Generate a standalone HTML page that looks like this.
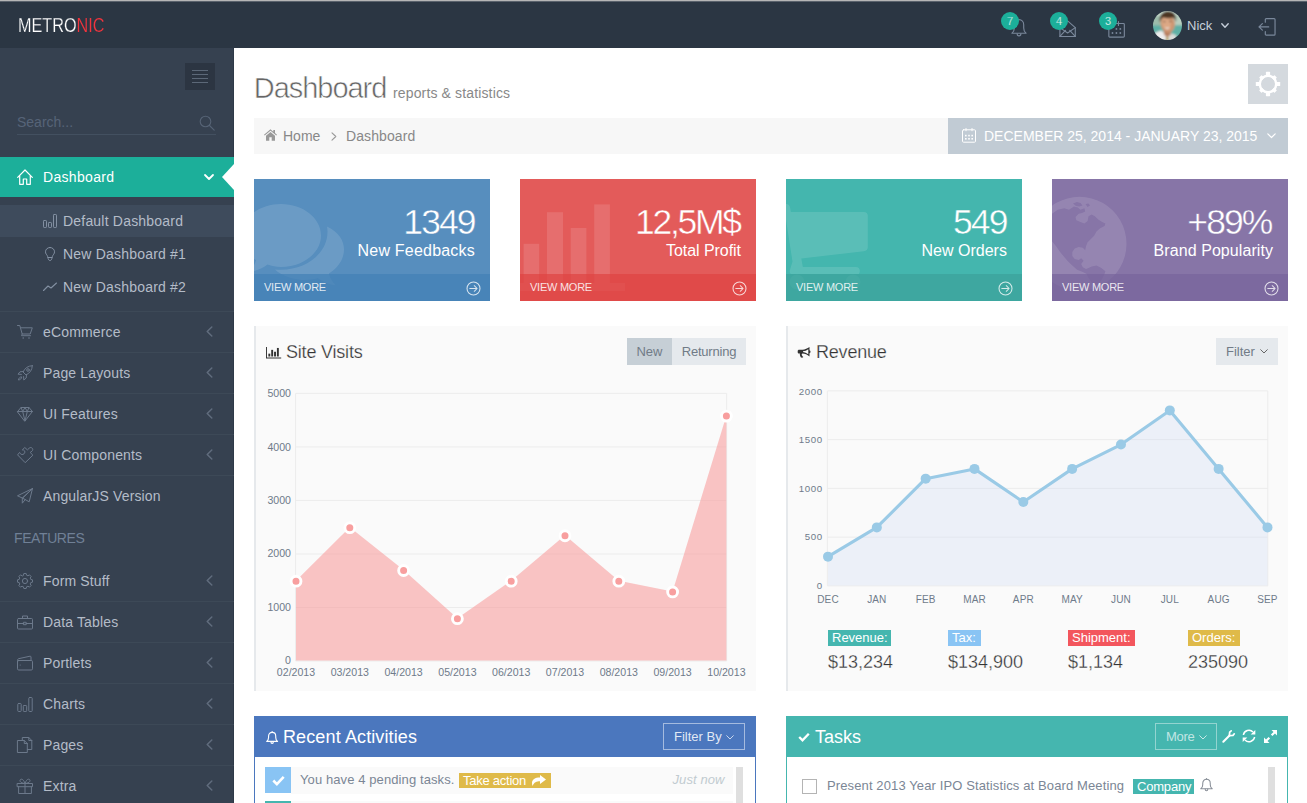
<!DOCTYPE html>
<html>
<head>
<meta charset="utf-8">
<title>Metronic | Dashboard</title>
<style>
*{box-sizing:border-box;margin:0;padding:0}
html,body{width:1307px;height:803px;overflow:hidden;background:#fff}
body{font-family:"Liberation Sans",sans-serif;font-size:14px;color:#333;position:relative}
.abs{position:absolute}
svg{display:block;overflow:visible}
/* header */
#hdr{position:absolute;left:0;top:0;width:1307px;height:48px;background:#2b3643}
#topline{position:absolute;left:0;top:0;width:1307px;height:2px;background:linear-gradient(#b6b6b6 0,#b6b6b6 50%,#5a626c 50%,#5a626c 100%)}
#logo{position:absolute;left:18px;top:14px;font-size:20.300px;line-height:22px;color:#fff;letter-spacing:0;transform-origin:0 50%;transform:scaleX(0.800);-webkit-text-stroke:0.250px #2b3643}
#logo b{font-weight:normal;color:#f0353e;-webkit-text-stroke:0.150px #2b3643}
.badge{position:absolute;width:18px;height:18px;border-radius:9px;background:#1caf9a;color:#fff;font-size:11px;line-height:18px;text-align:center;-webkit-text-stroke:0.250px #1caf9a}
#uname{position:absolute;left:1187px;top:18px;font-size:13px;line-height:16px;color:#c6cfda}
#avatar{position:absolute;left:1153px;top:11px;width:29px;height:29px}
/* sidebar */
#side{position:absolute;left:0;top:48px;width:234px;height:755px;background:#364150;border-right:1px solid #2e3947}
#toggler{position:absolute;left:185px;top:63px;width:30px;height:27px;background:#2c3542}
#toggler i{position:absolute;left:7px;width:16px;height:1px;background:#5c6878}
#search{position:absolute;left:17px;top:114px;font-size:14px;line-height:16px;color:#566478}
#searchline{position:absolute;left:17px;top:134px;width:199px;height:1px;background:#435060}
.mi{position:absolute;left:0;width:234px;height:41px;border-top:1px solid #3d4957;color:#b4bcc8;font-size:14px}
.mi span{position:absolute;left:43px;top:12px;line-height:16px;white-space:nowrap;letter-spacing:0.150px}
.mi svg.ic{position:absolute;left:17px;top:12px}
.mi svg.ar{position:absolute;left:205.500px;top:14.200px}
#act{position:absolute;left:0;top:157px;width:234px;height:40px;background:#1caf9a;color:#fff}
#act span{position:absolute;left:43px;top:12px;line-height:16px;letter-spacing:0.320px}
#sub{position:absolute;left:0;top:197px;width:234px;height:114px;background:#364150}
.si{position:absolute;left:0;width:234px;height:32px;color:#b4bcc8;font-size:14px}
.si span{position:absolute;left:63px;top:8px;line-height:16px;white-space:nowrap;letter-spacing:0.200px}
.si svg{position:absolute;left:43px;top:9px}
#feat{position:absolute;left:14px;top:529px;font-size:14px;line-height:18px;color:#708096;letter-spacing:-0.400px}
/* content */
#title{position:absolute;left:253.800px;top:70px;font-size:29px;line-height:36px;color:#666;letter-spacing:-1.050px;white-space:nowrap;-webkit-text-stroke:0.550px #fff}
#subtitle{position:absolute;left:393px;top:85px;font-size:14px;line-height:16px;color:#888;letter-spacing:0.140px;white-space:nowrap}
#gear{position:absolute;left:1248px;top:64px;width:40px;height:40px;background:#d4d9de}
#bc{position:absolute;left:254px;top:118px;width:1034px;height:36px;background:#f7f7f7;color:#888}
#bc span{position:absolute;top:10px;line-height:16px;font-size:14px;white-space:nowrap}
#drange{position:absolute;left:948px;top:118px;width:340px;height:36px;background:#c1cbd4;color:#fff}
#drange span{position:absolute;left:36px;top:10px;font-size:14px;line-height:16px;white-space:nowrap}

.tile{position:absolute;top:179px;width:236px;height:122px;overflow:hidden;color:#fff}
.tile .vis{position:absolute;left:0;top:0}
.tile .num{position:absolute;right:13.500px;top:22.500px;font-size:35.500px;line-height:40px;letter-spacing:-1.900px;white-space:nowrap;-webkit-text-stroke:0.450px var(--bg)}
.tile .desc{position:absolute;right:15px;top:62px;font-size:16px;line-height:20px;white-space:nowrap;letter-spacing:0.200px}
.tile .more{position:absolute;left:0;top:95px;width:236px;height:27px}
.tile .more span{position:absolute;left:10px;top:7px;font-size:11px;line-height:13px;color:rgba(255,255,255,0.85);white-space:nowrap;letter-spacing:-0.250px}
.tile .more svg{position:absolute;left:211.500px;top:6.600px}

.plt{position:absolute;top:326px;width:502px;height:365px;background:#fafafa;border-left:2px solid #e6e9ec}
.plt>*{margin-left:-2px}
.ptitle{position:absolute;top:15px;font-size:18px;line-height:22px;color:#333;white-space:nowrap;letter-spacing:-0.200px;-webkit-text-stroke:0.250px #fafafa}
.btn{position:absolute;top:12px;height:27px;font-size:13px;line-height:27px;color:#717b87;text-align:center;white-space:nowrap}
.yl{position:absolute;left:0;margin-top:-0.500px;height:14px;line-height:14px;font-size:10.600px;color:#6f7b8a;text-align:right;white-space:nowrap}
.xl{position:absolute;width:60px;height:14px;line-height:14px;font-size:10.600px;color:#6f7b8a;text-align:center;white-space:nowrap}
.xu{letter-spacing:0.120px;font-size:10px}
.lbl{position:absolute;height:15.500px;line-height:15.500px;font-size:13px;color:#fff;padding:0 0 0 4px;white-space:nowrap}
.sval{position:absolute;top:325px;font-size:18px;line-height:22px;color:#333;white-space:nowrap;-webkit-text-stroke:0.300px #fafafa}

.bp{position:absolute;top:716px;width:502px;height:100px}
.bp .hd{position:absolute;left:0;top:0;width:502px;height:41px}
.bp .bd{position:absolute;left:0;top:41px;width:502px;height:60px;background:#fff}
.bp .cap{position:absolute;top:10px;font-size:18px;line-height:22px;color:#fff;white-space:nowrap}
.obtn{position:absolute;top:7px;height:27px;border:1px solid rgba(255,255,255,0.42);color:rgba(255,255,255,0.68);font-size:13px;line-height:25px;padding-left:10px;white-space:nowrap}
.frow{position:absolute;left:37px;width:442px;height:27px;background:#fafafa}
.flbl{position:absolute;left:11px;width:26px;height:26px}
.ftxt{position:absolute;font-size:13px;line-height:16px;letter-spacing:0.100px;color:#7b8695;white-space:nowrap}
.slbl{position:absolute;height:15px;line-height:15px;font-size:13px;color:#fff;padding:0 0 0 4px;white-space:nowrap}
.rail{position:absolute;width:7px;background:#dfdfdf}
</style>
</head>
<body>
<!-- HEADER -->
<div id="hdr">
  <div id="logo">METRO<b>NIC</b></div>

<svg class="abs" style="left:1010.500px;top:18px" width="16" height="19.300" viewBox="0 0 17 20" fill="none" stroke="#7a889b" stroke-width="1.200" stroke-linejoin="round" stroke-linecap="round"><path d="M1 16c1.800-1.200 2.500-3 2.500-5.500v-3.500c0-3 2-5.500 5-5.500s5 2.500 5 5.500v3.500c0 2.500 0.700 4.300 2.500 5.500z"/><path d="M6.500 16.500c0 1.300 0.800 2.300 2 2.300s2-1 2-2.300"/></svg>
<div class="badge" style="left:1001px;top:12px">7</div>
<svg class="abs" style="left:1058.800px;top:19.700px" width="17.200" height="17.600" viewBox="0 0 18 19" fill="none" stroke="#7a889b" stroke-width="1.200" stroke-linejoin="round" stroke-linecap="round"><path d="M0.700 8.200L9 1l8.300 7.200v9.600h-16.600z"/><path d="M0.700 8.200L9 14l8.300-5.800"/><path d="M0.700 17.800l6-6.500m4.600 0l6 6.500"/></svg>
<div class="badge" style="left:1050px;top:12px">4</div>
<svg class="abs" style="left:1107.800px;top:20.500px" width="17.200" height="16.800" viewBox="0 0 18 18" fill="none" stroke="#7a889b" stroke-width="1.200" stroke-linejoin="round" stroke-linecap="round"><rect x="0.700" y="2.700" width="16.600" height="14.600" rx="1"/><path d="M11 0.700v4m-3-2h6"/><g fill="#7a889b" stroke="none"><circle cx="8.800" cy="8.500" r="1"/><circle cx="13" cy="8.500" r="1"/><circle cx="4.600" cy="12.800" r="1"/><circle cx="8.800" cy="12.800" r="1"/><circle cx="13" cy="12.800" r="1"/></g></svg>
<div class="badge" style="left:1099px;top:12px">3</div>
<div id="avatar"><svg width="29" height="29" viewBox="0 0 29 29"><defs><filter id="avb" x="-10%" y="-10%" width="120%" height="120%"><feGaussianBlur stdDeviation="0.850"/></filter><clipPath id="avc"><circle cx="14.500" cy="14.500" r="14.500"/></clipPath></defs><g clip-path="url(#avc)"><g filter="url(#avb)"><rect x="-2" y="-2" width="33" height="33" fill="#8fb7a8"/><rect x="-2" y="-2" width="33" height="8" fill="#c9dccf"/><rect x="-2" y="5" width="33" height="9" fill="#9dbcab"/><rect x="-2" y="14.500" width="33" height="17" fill="#5fb0a6"/><path d="M21 6h10v8h-10z" fill="#b9cfc0"/><path d="M0 24c2-2.500 5-3.500 8-4.500l5 3 6 1.500 4 3v5h-23z" fill="#ededed"/><path d="M17 22l6 2 1 6h-8z" fill="#d9dcd9"/><path d="M10.500 18h8l-1 6-3.500 2.500-3-3z" fill="#b87f5f"/><ellipse cx="14.800" cy="12.600" rx="7.200" ry="9" fill="#cf9672" transform="rotate(-6 14.800 12.600)"/><ellipse cx="13.500" cy="12" rx="4.500" ry="6" fill="#dca885" transform="rotate(-6 13.500 12)"/><path d="M6.800 11.500c-1.200-5.500 1.500-10.800 8-11.200c5.500-0.300 9.300 3.700 8.300 10.700c-0.500-2-1.200-3.500-2.300-4.600c-3.500 1.200-8 1-10.800-0.200c-1.800 1.300-2.700 3-3.200 5.300z" fill="#4b3524"/><path d="M11.300 16.300c1.800 0.800 4 0.800 6-0.300c-0.800 2.300-4.600 3-6 0.300z" fill="#f4ece6"/><ellipse cx="11.300" cy="10.600" rx="1.200" ry="0.600" fill="#5a4030"/><ellipse cx="17.300" cy="10.300" rx="1.200" ry="0.600" fill="#5a4030"/><path d="M12.800 27l1.500-1.500 1.300 1.500-0.500 3h-1.800z" fill="#a8923a"/></g></g></svg></div>
<div id="uname">Nick</div>
<svg class="abs" style="left:1221px;top:23px" width="8" height="6" viewBox="0 0 8 6" fill="none" stroke="#c6cfda" stroke-width="1.400" stroke-linecap="round" stroke-linejoin="round"><path d="M0.800 0.800L4 4.200l3.200-3.400"/></svg>
<svg class="abs" style="left:1258.200px;top:18.300px" width="18.500" height="17.800" viewBox="0 0 19 19" preserveAspectRatio="none" fill="none" stroke="#7a889b" stroke-width="1.200" stroke-linejoin="round" stroke-linecap="round"><path d="M7.500 4.500v-2.800c0-0.600 0.400-1 1-1h8c0.600 0 1 0.400 1 1v15.600c0 0.600-0.400 1-1 1h-8c-0.600 0-1-0.400-1-1v-2.800"/><path d="M11 9.500h-10m3.500-3.500l-3.500 3.500 3.500 3.500"/></svg>
  <div id="topline"></div>
</div>
<!-- SIDEBAR -->
<div id="side"></div>
<div id="toggler"><i style="top:7px"></i><i style="top:11px"></i><i style="top:15px"></i><i style="top:19px"></i></div>
<div id="search">Search...</div>
<div id="searchline"></div>
<svg class="abs" style="left:198.800px;top:114.800px" width="16" height="16" viewBox="0 0 16 16" fill="none" stroke="#566375" stroke-width="1.100" stroke-linecap="round"><circle cx="6.500" cy="6.500" r="5.300"/><path d="M10.500 10.500l4.700 4.700"/></svg>
<div id="act"><svg class="ic" style="position:absolute;left:17px;top:12px" width="16" height="16" viewBox="0 0 16 16" fill="none" stroke="#fff" stroke-width="1.2" stroke-linejoin="round" stroke-linecap="round"><path d="M0.700 8.300L8 1l7.300 7.300"/><path d="M2.700 6.800v8.500h3.600v-5.300h3.400v5.300h3.600v-8.500"/></svg><span>Dashboard</span><svg style="position:absolute;left:204px;top:17px" width="10" height="7" viewBox="0 0 10 7" fill="none" stroke="#fff" stroke-width="1.800" stroke-linecap="round" stroke-linejoin="round"><path d="M1 1l4 4 4-4"/></svg><svg style="position:absolute;left:222px;top:7px" width="12" height="26" viewBox="0 0 12 26"><path d="M12 0L0 13l12 13z" fill="#fff"/></svg></div>
<div id="sub"><div class="si" style="top:8px;background:#3e4b5c"><svg class="" width="14" height="14" viewBox="0 0 14 14" fill="none" stroke="#8390a2" stroke-width="1" stroke-linejoin="round" stroke-linecap="round"><rect x="0.500" y="6.500" width="3" height="7" rx="0.700"/><rect x="5.500" y="8.500" width="3" height="5" rx="0.700"/><rect x="10.500" y="0.500" width="3" height="13" rx="0.700"/></svg><span>Default Dashboard</span></div><div class="si" style="top:41px"><svg class="" width="14" height="14" viewBox="0 0 14 14" fill="none" stroke="#8390a2" stroke-width="1" stroke-linejoin="round" stroke-linecap="round"><path d="M7 0.500c-2.700 0-4.500 2-4.500 4.300 0 1.700 1 2.700 1.700 3.700 0.400 0.600 0.500 1.200 0.500 2h4.600c0-0.800 0.100-1.400 0.500-2 0.700-1 1.700-2 1.700-3.700 0-2.300-1.800-4.300-4.500-4.300z"/><path d="M5 10.500c0 2 0.800 3 2 3s2-1 2-3"/></svg><span>New Dashboard #1</span></div><div class="si" style="top:74px"><svg class="" width="14" height="14" viewBox="0 0 14 14" fill="none" stroke="#8390a2" stroke-width="1.1" stroke-linejoin="round" stroke-linecap="round"><path d="M0.500 10.500l4.500-4.500 3 2 5.500-5"/></svg><span>New Dashboard #2</span></div></div>
<div class="mi" style="top:311px"><svg class="ic" width="16" height="16" viewBox="0 0 16 16" fill="none" stroke="#6c798b" stroke-width="1" stroke-linejoin="round" stroke-linecap="round"><path d="M0.5 1.5h2.3l2.4 8.5h8l2.1-6.2h-11.4"/><path d="M5.2 10l-0.7 1.7h9" /><circle cx="6.2" cy="14" r="0.8" fill="#6c798b" stroke="none"/><circle cx="12" cy="14" r="0.8" fill="#6c798b" stroke="none"/></svg><span>eCommerce</span><svg class="ar" width="7" height="11" viewBox="0 0 7 11" fill="none" stroke="#606c7d" stroke-width="1.500" stroke-linecap="round" stroke-linejoin="round"><path d="M5.800 1L1.200 5.500l4.600 4.500"/></svg></div>
<div class="mi" style="top:352px"><svg class="ic" width="16" height="16" viewBox="0 0 16 16" fill="none" stroke="#6c798b" stroke-width="1" stroke-linejoin="round" stroke-linecap="round"><path d="M15.3 0.7c-4.2 0.1-7.3 2.3-9.3 6.3l3 3c4-2 6.2-5.100 6.300-9.300z"/><path d="M6.3 6.500l-3.300 0.300-2 2.400 3.400 0.200"/><path d="M9.500 9.700l-0.300 3.300-2.400 2 -0.200-3.400"/><circle cx="11" cy="5" r="1.300"/><path d="M4.200 11.800c-1.500 0.200-2.500 1.500-2.700 3.200 1.700-0.200 3-1.200 3.200-2.700"/></svg><span>Page Layouts</span><svg class="ar" width="7" height="11" viewBox="0 0 7 11" fill="none" stroke="#606c7d" stroke-width="1.500" stroke-linecap="round" stroke-linejoin="round"><path d="M5.800 1L1.200 5.500l4.600 4.500"/></svg></div>
<div class="mi" style="top:393px"><svg class="ic" width="16" height="16" viewBox="0 0 16 16" fill="none" stroke="#6c798b" stroke-width="1" stroke-linejoin="round" stroke-linecap="round"><path d="M0.600 5.500L4 1.500h8l3.400 4L8 15z"/><path d="M0.600 5.500h14.800"/><path d="M4 1.500l1.700 4L8 15l2.300-9.500L12 1.500"/><path d="M5.700 5.500L8 1.500l2.300 4"/></svg><span>UI Features</span><svg class="ar" width="7" height="11" viewBox="0 0 7 11" fill="none" stroke="#606c7d" stroke-width="1.500" stroke-linecap="round" stroke-linejoin="round"><path d="M5.800 1L1.200 5.500l4.600 4.500"/></svg></div>
<div class="mi" style="top:434px"><svg class="ic" width="16" height="16" viewBox="0 0 16 16" fill="none" stroke="#6c798b" stroke-width="1" stroke-linejoin="round" stroke-linecap="round"><path d="M7.900 15.400L0.600 7.900L2.600 5.400C3.200 7 4.600 7.900 6 7.400C7.600 6.800 8.300 5.200 7.600 3.900C7.100 3.100 6.200 2.800 5.300 2.900L7.800 0.500L10.400 2.900L12.200 1.200C13.200 0.200 14.500 0.400 15.200 1.200C16 2.100 16 3.200 15 4.100L13.200 5.500L15.600 7.900Z"/></svg><span>UI Components</span><svg class="ar" width="7" height="11" viewBox="0 0 7 11" fill="none" stroke="#606c7d" stroke-width="1.500" stroke-linecap="round" stroke-linejoin="round"><path d="M5.800 1L1.200 5.500l4.600 4.500"/></svg></div>
<div class="mi" style="top:475px"><svg class="ic" width="16" height="16" viewBox="0 0 16 16" fill="none" stroke="#6c798b" stroke-width="1" stroke-linejoin="round" stroke-linecap="round"><path d="M15.500 0.500L0.500 7.800l4.800 2.200z"/><path d="M15.500 0.500L5.300 10v5.200l2.900-3.600"/><path d="M15.500 0.500l-3.300 13.300-6.900-3.800"/></svg><span>AngularJS Version</span></div>
<div class="mi" style="top:560px;border-top-color:transparent"><svg class="ic" width="16" height="16" viewBox="0 0 16 16" fill="none" stroke="#6c798b" stroke-width="1" stroke-linejoin="round" stroke-linecap="round"><path d="M6.40 2.22 L6.84 0.49 L9.16 0.49 L9.60 2.22 L10.96 2.78 L12.49 1.87 L14.13 3.51 L13.22 5.04 L13.78 6.40 L15.51 6.84 L15.51 9.16 L13.78 9.60 L13.22 10.96 L14.13 12.49 L12.49 14.13 L10.96 13.22 L9.60 13.78 L9.16 15.51 L6.84 15.51 L6.40 13.78 L5.04 13.22 L3.51 14.13 L1.87 12.49 L2.78 10.96 L2.22 9.60 L0.49 9.16 L0.49 6.84 L2.22 6.40 L2.78 5.04 L1.87 3.51 L3.51 1.87 L5.04 2.78Z"/><circle cx="8" cy="8" r="2.600"/></svg><span>Form Stuff</span><svg class="ar" width="7" height="11" viewBox="0 0 7 11" fill="none" stroke="#606c7d" stroke-width="1.500" stroke-linecap="round" stroke-linejoin="round"><path d="M5.800 1L1.200 5.500l4.600 4.500"/></svg></div>
<div class="mi" style="top:601px"><svg class="ic" width="16" height="16" viewBox="0 0 16 16" fill="none" stroke="#6c798b" stroke-width="1" stroke-linejoin="round" stroke-linecap="round"><rect x="0.500" y="4.500" width="15" height="10.500" rx="1"/><path d="M5.500 4.500v-2.500h5v2.500"/><path d="M0.500 9.500h6.300m2.400 0h6.300"/><rect x="6.800" y="8.300" width="2.400" height="2.400"/></svg><span>Data Tables</span><svg class="ar" width="7" height="11" viewBox="0 0 7 11" fill="none" stroke="#606c7d" stroke-width="1.500" stroke-linecap="round" stroke-linejoin="round"><path d="M5.800 1L1.200 5.500l4.600 4.500"/></svg></div>
<div class="mi" style="top:642px"><svg class="ic" width="16" height="16" viewBox="0 0 16 16" fill="none" stroke="#6c798b" stroke-width="1" stroke-linejoin="round" stroke-linecap="round"><rect x="0.500" y="5.500" width="15" height="9.500" rx="1.200"/><path d="M0.500 6.800v-1.500c0-1 0.600-1.500 1.500-1.700l11-2.400c0.600-0.100 1 0.200 1 0.800v3.500"/><circle cx="3.200" cy="10" r="0.600" fill="#6c798b" stroke="none"/></svg><span>Portlets</span><svg class="ar" width="7" height="11" viewBox="0 0 7 11" fill="none" stroke="#606c7d" stroke-width="1.500" stroke-linecap="round" stroke-linejoin="round"><path d="M5.800 1L1.200 5.500l4.600 4.500"/></svg></div>
<div class="mi" style="top:683px"><svg class="ic" width="16" height="16" viewBox="0 0 16 16" fill="none" stroke="#6c798b" stroke-width="1" stroke-linejoin="round" stroke-linecap="round"><rect x="0.800" y="7.500" width="3.400" height="8" rx="0.800"/><rect x="6.300" y="9.500" width="3.400" height="6" rx="0.800"/><rect x="11.800" y="1.500" width="3.400" height="14" rx="0.800"/></svg><span>Charts</span><svg class="ar" width="7" height="11" viewBox="0 0 7 11" fill="none" stroke="#606c7d" stroke-width="1.500" stroke-linecap="round" stroke-linejoin="round"><path d="M5.800 1L1.200 5.500l4.600 4.500"/></svg></div>
<div class="mi" style="top:724px"><svg class="ic" width="16" height="16" viewBox="0 0 16 16" fill="none" stroke="#6c798b" stroke-width="1" stroke-linejoin="round" stroke-linecap="round"><path d="M0.800 3.500h6.500l3 3v9h-9.500z"/><path d="M7.300 3.500v3h3"/><path d="M5.300 3.300v-2.800h6.500l3 3v9h-4.300"/><path d="M11.800 0.500v3h3"/></svg><span>Pages</span><svg class="ar" width="7" height="11" viewBox="0 0 7 11" fill="none" stroke="#606c7d" stroke-width="1.500" stroke-linecap="round" stroke-linejoin="round"><path d="M5.800 1L1.200 5.500l4.600 4.500"/></svg></div>
<div class="mi" style="top:765px"><svg class="ic" width="16" height="16" viewBox="0 0 16 16" fill="none" stroke="#6c798b" stroke-width="1" stroke-linejoin="round" stroke-linecap="round"><rect x="0.500" y="5.500" width="15" height="3.200"/><path d="M1.600 8.700v6.800h12.800v-6.800"/><path d="M8 5.500v10"/><path d="M8 5.500c-0.800-2.800-2.300-4.300-3.600-4.300s-1.700 1.200-1.200 2.200 2.300 1.900 4.800 2.100c0.800-2.800 2.300-4.300 3.600-4.300s1.700 1.200 1.200 2.200-2.300 1.900-4.800 2.100"/></svg><span>Extra</span><svg class="ar" width="7" height="11" viewBox="0 0 7 11" fill="none" stroke="#606c7d" stroke-width="1.500" stroke-linecap="round" stroke-linejoin="round"><path d="M5.800 1L1.200 5.500l4.600 4.500"/></svg></div>
<div id="feat">FEATURES</div>
<!-- PAGE HEAD -->
<div id="title">Dashboard</div><div id="subtitle">reports &amp; statistics</div>
<div id="gear"><svg width="40" height="40" viewBox="0 0 40 40" fill="#fff"><circle cx="20" cy="20" r="8.200" fill="none" stroke="#fff" stroke-width="2.400"/><rect x="17.9" y="7.800000000000001" width="4.2" height="5.199999999999999" rx="0.6" transform="rotate(0 20 20)"/><rect x="18.2" y="9.1" width="3.6" height="3.9000000000000004" rx="0.6" transform="rotate(45 20 20)"/><rect x="17.9" y="7.800000000000001" width="4.2" height="5.199999999999999" rx="0.6" transform="rotate(90 20 20)"/><rect x="18.2" y="9.1" width="3.6" height="3.9000000000000004" rx="0.6" transform="rotate(135 20 20)"/><rect x="17.9" y="7.800000000000001" width="4.2" height="5.199999999999999" rx="0.6" transform="rotate(180 20 20)"/><rect x="18.2" y="9.1" width="3.6" height="3.9000000000000004" rx="0.6" transform="rotate(225 20 20)"/><rect x="17.9" y="7.800000000000001" width="4.2" height="5.199999999999999" rx="0.6" transform="rotate(270 20 20)"/><rect x="18.2" y="9.1" width="3.6" height="3.9000000000000004" rx="0.6" transform="rotate(315 20 20)"/></svg></div>
<div id="bc"><svg class="abs" style="left:10px;top:11px" width="13" height="12" viewBox="0 0 13 12" fill="#999"><path d="M6.500 0.300L0 5.800l0.700 0.800L6.500 1.800l5.800 4.800 0.700-0.800-2-1.700v-3h-1.700v1.600z"/><path d="M6.500 3L2 6.800v4.900h3.300v-3.400h2.400v3.400h3.300v-4.900z"/></svg><svg class="abs" style="left:77px;top:14px" width="6" height="9" viewBox="0 0 6 9" fill="none" stroke="#999" stroke-width="1.100" stroke-linecap="round" stroke-linejoin="round"><path d="M1 0.800l3.800 3.700-3.800 3.700"/></svg><span style="left:29px">Home</span><span style="left:92px;letter-spacing:0.100px">Dashboard</span></div>
<div id="drange"><svg class="abs" style="left:14px;top:10px" width="14" height="15" viewBox="0 0 14 15" fill="none" stroke="#fff" stroke-width="1" stroke-linejoin="round" stroke-linecap="round"><rect x="0.500" y="1.800" width="13" height="12.400" rx="1"/><path d="M4 0.500v2.300m6-2.300v2.300"/><g fill="#fff" stroke="none"><rect x="3" y="6.800" width="1.600" height="1.600"/><rect x="6.200" y="6.800" width="1.600" height="1.600"/><rect x="9.400" y="6.800" width="1.600" height="1.600"/><rect x="3" y="10" width="1.600" height="1.600"/><rect x="6.200" y="10" width="1.600" height="1.600"/><rect x="9.400" y="10" width="1.600" height="1.600"/></g></svg><svg class="abs" style="left:319px;top:15px" width="9" height="6" viewBox="0 0 9 6" fill="none" stroke="#fff" stroke-width="1.200" stroke-linecap="round" stroke-linejoin="round"><path d="M0.800 0.800l3.700 3.700 3.700-3.700"/></svg><span>DECEMBER 25, 2014 - JANUARY 23, 2015</span></div>
<div class="tile" style="left:254px;background:#578ebe;--bg:#578ebe"><div class="more" style="background:#4884b8"></div><svg class="vis" width="236" height="122" viewBox="0 0 236 122"><defs><clipPath id="c1"><rect width="236" height="95"/></clipPath><clipPath id="c1b"><rect y="95" width="236" height="27"/></clipPath></defs>
<g clip-path="url(#c1)" fill="rgba(255,255,255,0.12)"><path d="M27 25c-22 0-40 14-40 31.500 0 10 5.800 18.800 15 24.500-1 4.500-3.500 8.500-7 12 8-1 14-4 18.500-7.500 4.300 1.600 8.700 2.500 13.500 2.500 22 0 40-14 40-31.500s-18-31.500-40-31.500z"/>
<path d="M73 47.500c0.300 1.700 0.500 3.400 0.500 5.200 0 21-20.500 38-46.500 38-2 0-4-0.100-6-0.300 7 6.600 18 10.600 30 10.600 4.500 0 8.800-0.600 12.800-1.700 4.500 3.500 10.500 6.200 18.200 7.200-3.500-3.500-6-7.500-7-12 9.200-5.700 15-14.500 15-24 0-9-5.200-17.200-17-23z"/></g>
<g clip-path="url(#c1b)" fill="rgba(255,255,255,0.035)"><path d="M73 47.500c0.300 1.700 0.500 3.400 0.500 5.200 0 21-20.500 38-46.500 38-2 0-4-0.100-6-0.300 7 6.600 18 10.600 30 10.600 4.500 0 8.800-0.600 12.800-1.700 4.500 3.500 10.500 6.200 18.200 7.200-3.500-3.500-6-7.500-7-12 9.200-5.700 15-14.500 15-24 0-9-5.200-17.200-17-23z"/></g></svg><div class="num" style="right:15.300px">1349</div><div class="desc" style="letter-spacing:0.210px">New Feedbacks</div><div class="more" style="background:none"><span>VIEW MORE</span><svg width="15" height="15" viewBox="0 0 15 15" fill="none" stroke="rgba(255,255,255,0.780)" stroke-width="1.050" stroke-linecap="round" stroke-linejoin="round"><circle cx="7.500" cy="7.500" r="6.500"/><path d="M3.800 7.500h7.200M8.300 4.700l2.800 2.800-2.800 2.800"/></svg></div></div>
<div class="tile" style="left:520px;background:#e35b5a;--bg:#e35b5a"><div class="more" style="background:#e04a49"></div><svg class="vis" width="236" height="122" viewBox="0 0 236 122"><g fill="rgba(255,255,255,0.12)"><rect x="3.600" y="64.800" width="15.600" height="30.200"/><rect x="27" y="33.200" width="16" height="61.800"/><rect x="50.700" y="49" width="15.700" height="46"/><rect x="74.200" y="25.400" width="15.700" height="69.600"/></g><g fill="rgba(255,255,255,0.035)"><rect x="3.600" y="95" width="15.600" height="9"/><rect x="27" y="95" width="16" height="9"/><rect x="50.700" y="95" width="15.700" height="9"/><rect x="74.200" y="95" width="15.700" height="9"/><rect x="0" y="104" width="105" height="8"/></g></svg><div class="num" style="right:16.400px;letter-spacing:-2.300px">12,5M$</div><div class="desc" style="letter-spacing:-0.050px">Total Profit</div><div class="more" style="background:none"><span>VIEW MORE</span><svg width="15" height="15" viewBox="0 0 15 15" fill="none" stroke="rgba(255,255,255,0.780)" stroke-width="1.050" stroke-linecap="round" stroke-linejoin="round"><circle cx="7.500" cy="7.500" r="6.500"/><path d="M3.800 7.500h7.200M8.300 4.700l2.800 2.800-2.800 2.800"/></svg></div></div>
<div class="tile" style="left:786px;background:#44b6ae;--bg:#44b6ae"><div class="more" style="background:#3ea7a0"></div><svg class="vis" width="236" height="122" viewBox="0 0 236 122"><defs><clipPath id="c3"><rect width="236" height="95"/></clipPath></defs><g clip-path="url(#c3)" fill="rgba(255,255,255,0.12)"><path d="M-6 25h6c2.500 0 3.800 1.500 4.200 4l0.600 4h73c2.500 0 4 1.500 4 4v31c0 2.500-1.500 3.800-4 4.200l-62.500 7.300 1.500 8.500h53c2.500 0 4 1.500 4 4s-1.500 4-4 4h-62c-3 0-4.500-2-4-4.500l2.700-9-7.700-49.500h-4.800z"/></g><g fill="rgba(255,255,255,0.035)"><circle cx="11" cy="103" r="7.500"/><circle cx="67" cy="103" r="7.500"/></g></svg><div class="num" style="right:15.500px">549</div><div class="desc" style="letter-spacing:0.020px">New Orders</div><div class="more" style="background:none"><span>VIEW MORE</span><svg width="15" height="15" viewBox="0 0 15 15" fill="none" stroke="rgba(255,255,255,0.780)" stroke-width="1.050" stroke-linecap="round" stroke-linejoin="round"><circle cx="7.500" cy="7.500" r="6.500"/><path d="M3.800 7.500h7.200M8.300 4.700l2.800 2.800-2.800 2.800"/></svg></div></div>
<div class="tile" style="left:1052px;background:#8775a7;--bg:#8775a7"><div class="more" style="background:#7c699f"></div><svg class="vis" width="236" height="122" viewBox="0 0 236 122"><defs><clipPath id="c4"><rect width="236" height="95"/></clipPath><clipPath id="c4b"><rect y="95" width="236" height="27"/></clipPath></defs>
<path clip-path="url(#c4)" fill="rgba(255,255,255,0.12)" fill-rule="evenodd" d="M27.500 17.800a47 47 0 1 0 0.010 0zM0 34.8 L5.7 30.8 L12.2 29.2 L17 30.8 L21.9 27.6 L25.9 28.4 L28.4 30.8 L32.4 29.2 L33.2 32.4 L30 34 L26.7 34.8 L23.5 38.1 L24.3 41.3 L28.4 42.9 L32.4 44.5 L35.6 42.1 L36.5 37.3 L39.7 35.6 L42.9 37.3 L46.2 40.5 L50.2 42.9 L53.4 44.5 L52.6 47 L47.8 49.4 L44.5 52.6 L42.1 56.7 L38.9 59.9 L35.6 63.2 L34 67.2 L33.2 71.2 L30.8 68.8 L26.7 68 L22.7 69.6 L20.3 72.9 L20.3 76.9 L22.7 80.1 L26.7 81 L29.2 79.3 L31.6 81.8 L29.2 85 L30.8 88.2 L34 89.9 L36.5 89 L39.7 87.4 L44.5 86.6 L49.4 89 L53.4 92.3 L52.6 94.7 L50 100 L44 108 L40 104 L36 98 L34.8 95 L30.8 93.1 L25.1 90.7 L20.3 86.6 L15.4 81.8 L11.4 76.9 L8.1 72.9 L4.1 67.2 L0 62.3 L-8 50ZM21 24.500l4-1.500 3.500 1 2 2.500-3 1-3.500-0.500zM33.500 25l3-0.500 1.500 2-2.500 1.500z"/>
<path clip-path="url(#c4b)" fill="rgba(255,255,255,0.035)" fill-rule="evenodd" d="M27.500 17.800a47 47 0 1 0 0.010 0zM0 34.8 L5.7 30.8 L12.2 29.2 L17 30.8 L21.9 27.6 L25.9 28.4 L28.4 30.8 L32.4 29.2 L33.2 32.4 L30 34 L26.7 34.8 L23.5 38.1 L24.3 41.3 L28.4 42.9 L32.4 44.5 L35.6 42.1 L36.5 37.3 L39.7 35.6 L42.9 37.3 L46.2 40.5 L50.2 42.9 L53.4 44.5 L52.6 47 L47.8 49.4 L44.5 52.6 L42.1 56.7 L38.9 59.9 L35.6 63.2 L34 67.2 L33.2 71.2 L30.8 68.8 L26.7 68 L22.7 69.6 L20.3 72.9 L20.3 76.9 L22.7 80.1 L26.7 81 L29.2 79.3 L31.6 81.8 L29.2 85 L30.8 88.2 L34 89.9 L36.5 89 L39.7 87.4 L44.5 86.6 L49.4 89 L53.4 92.3 L52.6 94.7 L50 100 L44 108 L40 104 L36 98 L34.8 95 L30.8 93.1 L25.1 90.7 L20.3 86.6 L15.4 81.8 L11.4 76.9 L8.1 72.9 L4.1 67.2 L0 62.3 L-8 50Z"/></svg><div class="num" style="right:16.500px">+89%</div><div class="desc" style="letter-spacing:0.070px">Brand Popularity</div><div class="more" style="background:none"><span>VIEW MORE</span><svg width="15" height="15" viewBox="0 0 15 15" fill="none" stroke="rgba(255,255,255,0.780)" stroke-width="1.050" stroke-linecap="round" stroke-linejoin="round"><circle cx="7.500" cy="7.500" r="6.500"/><path d="M3.800 7.500h7.200M8.300 4.700l2.800 2.800-2.800 2.800"/></svg></div></div>
<div class="plt" style="left:254px">
<svg class="abs" style="left:12.200px;top:20.700px" width="15.200" height="11.400" viewBox="0 0 16 12" fill="#333"><path d="M0 0h1v11h15v1h-16z"/><rect x="2.500" y="7" width="2" height="3"/><rect x="5.500" y="3" width="2" height="7"/><rect x="8.500" y="5" width="2" height="5"/><rect x="11.500" y="1" width="2" height="9"/></svg>
<div class="ptitle" style="left:32px">Site Visits</div>
<div class="btn" style="left:373px;width:45px;background:#c6cfd6">New</div><div class="btn" style="left:418px;width:74px;background:#e5e9ed;letter-spacing:-0.200px">Returning</div>
<svg class="abs" style="left:0;top:0" width="502" height="365" viewBox="0 0 502 365"><g stroke="#ececec" stroke-width="1" fill="none"><path d="M41.6 335H472.7"/><path d="M41.6 281.48H472.7"/><path d="M41.6 227.96H472.7"/><path d="M41.6 174.44H472.7"/><path d="M41.6 120.92H472.7"/><path d="M41.6 67.4H472.7"/><path d="M41.6 67.4V335M472.7 67.4V335"/></g><path d="M42 254.72 L95.8 201.2 L149.6 244.02 L203.4 292.18 L257.2 254.72 L311 209.23 L364.8 254.72 L418.6 265.42 L472.4 89.61 L472.4 334.6 L42 334.6Z" fill="rgba(248,159,159,0.6)"/><circle cx="42" cy="255.22" r="4.950" fill="#f89f9f" stroke="#fff" stroke-width="2.900"/><circle cx="95.8" cy="201.7" r="4.950" fill="#f89f9f" stroke="#fff" stroke-width="2.900"/><circle cx="149.6" cy="244.52" r="4.950" fill="#f89f9f" stroke="#fff" stroke-width="2.900"/><circle cx="203.4" cy="292.68" r="4.950" fill="#f89f9f" stroke="#fff" stroke-width="2.900"/><circle cx="257.2" cy="255.22" r="4.950" fill="#f89f9f" stroke="#fff" stroke-width="2.900"/><circle cx="311" cy="209.73" r="4.950" fill="#f89f9f" stroke="#fff" stroke-width="2.900"/><circle cx="364.8" cy="255.22" r="4.950" fill="#f89f9f" stroke="#fff" stroke-width="2.900"/><circle cx="418.6" cy="265.92" r="4.950" fill="#f89f9f" stroke="#fff" stroke-width="2.900"/><circle cx="472.4" cy="90.11" r="4.950" fill="#f89f9f" stroke="#fff" stroke-width="2.900"/></svg>
<div class="yl" style="top:327.4px;width:37px">0</div><div class="yl" style="top:274.08px;width:37px">1000</div><div class="yl" style="top:220.76px;width:37px">2000</div><div class="yl" style="top:167.44px;width:37px">3000</div><div class="yl" style="top:114.12px;width:37px">4000</div><div class="yl" style="top:60.8px;width:37px">5000</div><div class="xl" style="left:12px;top:339.4px">02/2013</div><div class="xl" style="left:65.8px;top:339.4px">03/2013</div><div class="xl" style="left:119.6px;top:339.4px">04/2013</div><div class="xl" style="left:173.4px;top:339.4px">05/2013</div><div class="xl" style="left:227.2px;top:339.4px">06/2013</div><div class="xl" style="left:281px;top:339.4px">07/2013</div><div class="xl" style="left:334.8px;top:339.4px">08/2013</div><div class="xl" style="left:388.6px;top:339.4px">09/2013</div><div class="xl" style="left:442.4px;top:339.4px">10/2013</div>
</div>
<div class="plt" style="left:786px">
<svg class="abs" style="left:11.200px;top:20.500px" width="14" height="13" viewBox="0 0 14 13" fill="#333"><path d="M12.500 0v3.200c0.600 0.200 1 0.800 1 1.500s-0.400 1.300-1 1.500v3.300c-2.200-1.800-4.500-2.700-7-2.900c-0.700 0.300-1 1-0.600 1.700 0.300 0.700 0.900 1.300 1.400 1.700-0.400 0.700-1.700 0.900-2.600 0.300-0.500-1.200-1.100-2.400-0.800-3.700h-0.900c-0.700 0-1.300-0.600-1.300-1.300v-1.300c0-0.700 0.600-1.300 1.300-1.300h3.500c2.500-0.200 4.800-1.100 7-2.700zM11.300 2.200c-1.700 1.200-3.500 1.900-5.300 2.100v0.800c1.800 0.200 3.600 0.900 5.300 2.100z"/></svg>
<div class="ptitle" style="left:30px">Revenue</div>
<div class="btn" style="left:430px;width:62px;background:#e5e9ed;text-align:left;padding-left:10px">Filter<svg class="abs" style="left:44px;top:11px" width="8" height="5" viewBox="0 0 8 5" fill="none" stroke="#666" stroke-width="1" stroke-linecap="round" stroke-linejoin="round"><path d="M0.700 0.700l3.300 3.300 3.300-3.300"/></svg></div>
<svg class="abs" style="left:0;top:0" width="502" height="365" viewBox="0 0 502 365"><g stroke="#ececec" stroke-width="1" fill="none"><path d="M41.4 259.9H481.77"/><path d="M41.4 211.15H481.77"/><path d="M41.4 162.4H481.77"/><path d="M41.4 113.65H481.77"/><path d="M41.4 64.9H481.77"/><path d="M41.4 64.9V259.9M481.77 64.9V259.9"/></g><path d="M42 230.65 L90.83 201.4 L139.66 152.65 L188.49 142.9 L237.32 176.05 L286.15 142.9 L334.98 118.52 L383.81 84.4 L432.64 142.9 L481.47 201.4 L481.47 259.5 L42 259.5Z" fill="rgba(200,215,245,0.28)"/><path d="M42 230.65 L90.83 201.4 L139.66 152.65 L188.49 142.9 L237.32 176.05 L286.15 142.9 L334.98 118.52 L383.81 84.4 L432.64 142.9 L481.47 201.4" fill="none" stroke="#9acae6" stroke-width="3.100" stroke-linejoin="round"/><circle cx="42" cy="230.65" r="5" fill="#9acae6"/><circle cx="90.83" cy="201.4" r="5" fill="#9acae6"/><circle cx="139.66" cy="152.65" r="5" fill="#9acae6"/><circle cx="188.49" cy="142.9" r="5" fill="#9acae6"/><circle cx="237.32" cy="176.05" r="5" fill="#9acae6"/><circle cx="286.15" cy="142.9" r="5" fill="#9acae6"/><circle cx="334.98" cy="118.52" r="5" fill="#9acae6"/><circle cx="383.81" cy="84.4" r="5" fill="#9acae6"/><circle cx="432.64" cy="142.9" r="5" fill="#9acae6"/><circle cx="481.47" cy="201.4" r="5" fill="#9acae6"/></svg>
<div class="yl" style="font-size:9.700px;letter-spacing:0.620px;margin-left:-2.300px;top:253px;width:37px">0</div><div class="yl" style="font-size:9.700px;letter-spacing:0.620px;margin-left:-2.300px;top:204.57px;width:37px">500</div><div class="yl" style="font-size:9.700px;letter-spacing:0.620px;margin-left:-2.300px;top:156.15px;width:37px">1000</div><div class="yl" style="font-size:9.700px;letter-spacing:0.620px;margin-left:-2.300px;top:107.72px;width:37px">1500</div><div class="yl" style="font-size:9.700px;letter-spacing:0.620px;margin-left:-2.300px;top:59.3px;width:37px">2000</div><div class="xl xu" style="left:12px;top:267.2px">DEC</div><div class="xl xu" style="left:60.83px;top:267.2px">JAN</div><div class="xl xu" style="left:109.66px;top:267.2px">FEB</div><div class="xl xu" style="left:158.49px;top:267.2px">MAR</div><div class="xl xu" style="left:207.32px;top:267.2px">APR</div><div class="xl xu" style="left:256.15px;top:267.2px">MAY</div><div class="xl xu" style="left:304.98px;top:267.2px">JUN</div><div class="xl xu" style="left:353.81px;top:267.2px">JUL</div><div class="xl xu" style="left:402.64px;top:267.2px">AUG</div><div class="xl xu" style="left:451.47px;top:267.2px">SEP</div><div class="lbl" style="left:42px;top:304px;width:63px;background:#45b6af">Revenue:</div><div class="sval" style="left:42px">$13,234</div><div class="lbl" style="left:162px;top:304px;width:33.3px;background:#89c4f4">Tax:</div><div class="sval" style="left:162px">$134,900</div><div class="lbl" style="left:282px;top:304px;width:66.8px;background:#f3565d">Shipment:</div><div class="sval" style="left:282px">$1,134</div><div class="lbl" style="left:402px;top:304px;width:52.2px;background:#dfba49">Orders:</div><div class="sval" style="left:402px">235090</div>
</div>
<div class="bp" style="left:254px">
<div class="hd" style="background:#4b77be"></div>
<svg class="abs" style="left:11.700px;top:14.600px" width="12.300" height="13.600" viewBox="0 0 12 13" fill="none" stroke="#fff" stroke-width="1.100" stroke-linejoin="round" stroke-linecap="round"><path d="M0.700 10c1.300-0.800 1.800-2 1.800-3.700v-1.300c0-2.200 1.500-3.800 3.500-3.800s3.500 1.600 3.500 3.800v1.300c0 1.700 0.500 2.900 1.800 3.700z"/><path d="M4.800 10.300c0 0.900 0.500 1.600 1.200 1.600s1.200-0.700 1.200-1.600M6 0.500v0.700"/></svg>
<div class="cap" style="left:29px;letter-spacing:0.120px">Recent Activities</div>
<div class="obtn" style="left:409px;width:82px;color:rgba(255,255,255,0.850);border-color:rgba(255,255,255,0.500)">Filter By<svg class="abs" style="left:62px;top:11px" width="8" height="5" viewBox="0 0 8 5" fill="none" stroke="rgba(255,255,255,0.700)" stroke-width="1" stroke-linecap="round" stroke-linejoin="round"><path d="M0.700 0.700l3.300 3.300 3.300-3.300"/></svg></div>
<div class="bd" style="box-shadow:inset 1px 0 0 #4b77be,inset -1px 0 0 #4b77be">
 <div class="frow" style="top:10px"></div>
 <div class="flbl" style="top:10px;background:#89c4f4"><svg class="abs" style="left:6.500px;top:7.500px" width="13" height="11" viewBox="0 0 12 10" fill="none" stroke="#fff" stroke-width="2.400" stroke-linejoin="miter"><path d="M1.200 5l3.300 3.300 6.300-6.600"/></svg></div>
 <div class="ftxt" style="left:46px;top:15px">You have 4 pending tasks.</div>
 <div class="slbl" style="left:205px;top:16px;width:92px;background:#dfba49;letter-spacing:-0.250px">Take action<svg class="abs" style="left:72px;top:2px" width="15" height="11" viewBox="0 0 15 11" fill="#fff"><path d="M9 0l6 4.500-6 4.500v-2.800c-3.500 0-6 1-7.500 4.800-0.300-1.200-0.500-2-0.500-3 0-3.500 3-5.500 8-5.500z"/></svg></div>
 <div class="ftxt" style="left:418.500px;top:15px;font-style:italic;font-size:13px;color:#c1cbd0">Just now</div>
 <div class="frow" style="top:44px"></div>
 <div class="flbl" style="top:44px;background:#45b6af"></div>
 <div class="rail" style="left:482px;top:10px;height:60px"></div>
</div>
</div>
<div class="bp" style="left:786px">
<div class="hd" style="background:#45b6af"></div>
<svg class="abs" style="left:12px;top:16px" width="12" height="10" viewBox="0 0 12 10" fill="none" stroke="#fff" stroke-width="2.300" stroke-linejoin="miter"><path d="M1.200 5l3.300 3.300 6.300-6.600"/></svg>
<div class="cap" style="left:29px">Tasks</div>
<div class="obtn" style="left:369px;width:62px;letter-spacing:-0.300px">More<svg class="abs" style="left:42.500px;top:11px" width="8" height="5" viewBox="0 0 8 5" fill="none" stroke="rgba(255,255,255,0.700)" stroke-width="1" stroke-linecap="round" stroke-linejoin="round"><path d="M0.700 0.700l3.300 3.300 3.300-3.300"/></svg></div>
<svg class="abs" style="left:436px;top:14px" width="13" height="13" viewBox="0 0 13 13" fill="none" stroke="#fff" stroke-linecap="round"><path d="M1.300 11.700l6.200-6.200" stroke-width="2"/><path d="M7.300 5.700l0.400-3.600 1.500-1.300M7.300 5.700l3.700-0.300 1.300-1.600" stroke-width="1.700" stroke-linejoin="round"/></svg>
<svg class="abs" style="left:456px;top:13px" width="14" height="14" viewBox="0 0 14 14" fill="none" stroke="#fff" stroke-width="1.500"><path d="M1.400 6a5.600 5.600 0 0 1 9.600-3"/><path d="M12.600 8a5.600 5.600 0 0 1-9.600 3"/><path d="M13.300 1v4.600h-4.600z" fill="#fff" stroke="none"/><path d="M0.700 13v-4.600h4.600z" fill="#fff" stroke="none"/></svg>
<svg class="abs" style="left:478px;top:14px" width="13" height="13" viewBox="0 0 13 13" fill="#fff"><path d="M7.500 0h5.500v5.500l-2-2-2.600 2.600-1.500-1.500 2.600-2.600zM5.500 13h-5.500v-5.500l2 2 2.600-2.600 1.500 1.500-2.600 2.600z"/></svg>
<div class="bd" style="box-shadow:inset 1px 0 0 #45b6af,inset -1px 0 0 #45b6af">
 <div class="abs" style="left:16px;top:22px;width:15px;height:15px;border:1px solid #b4b4b4;background:#fff"></div>
 <div class="ftxt" style="left:41px;top:21px;letter-spacing:0.120px">Present 2013 Year IPO Statistics at Board Meeting</div>
 <div class="slbl" style="left:347px;top:22px;width:61px;font-size:13px;height:15px;line-height:15px;background:#45b6af;letter-spacing:-0.200px">Company</div>
 <svg class="abs" style="left:414px;top:21px" width="13" height="14" viewBox="0 0 12 13" fill="none" stroke="#8a9099" stroke-width="1" stroke-linejoin="round" stroke-linecap="round"><path d="M0.700 10c1.300-0.800 1.800-2 1.800-3.700v-1.300c0-2.200 1.500-3.800 3.500-3.800s3.500 1.600 3.500 3.800v1.300c0 1.700 0.500 2.900 1.800 3.700z"/><path d="M4.800 10.300c0 0.900 0.500 1.600 1.200 1.600s1.200-0.700 1.200-1.600M6 0.500v0.700"/></svg>
 <div class="rail" style="left:482px;top:10px;height:60px"></div>
</div>
</div>
</body>
</html>
